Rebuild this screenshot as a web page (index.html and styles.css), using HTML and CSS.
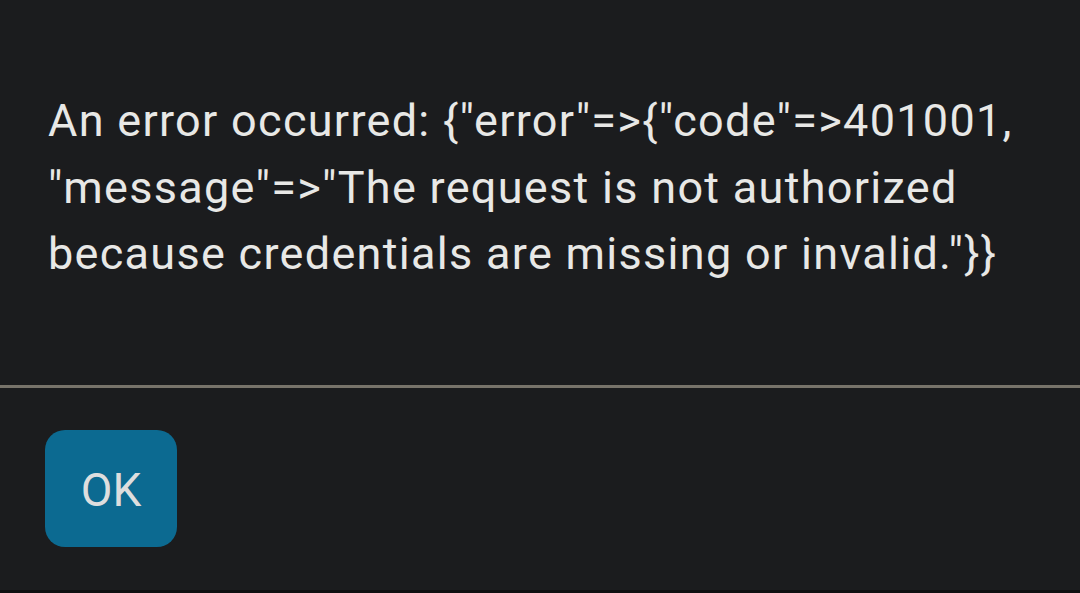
FILE: index.html
```html
<!DOCTYPE html>
<html lang="en">
<head>
  <meta charset="UTF-8" />
  <meta name="viewport" content="width=device-width, initial-scale=1.0" />
  <title>Error</title>
  <link rel="stylesheet" href="styles.css">
</head>
<body>
  <div class="dialog">
    <p class="message">An error occurred: {"error"=&gt;{"code"=&gt;401001, "message"=&gt;"The request is not authorized because credentials are missing or invalid."}}</p>
    <hr class="divider">
    <div class="actions">
      <button class="btn-ok" type="button">OK</button>
    </div>
  </div>
  <div class="behind"></div>
</body>
</html>
```

FILE: styles.css
```css
* {
  box-sizing: border-box;
  margin: 0;
  padding: 0;
}
html, body {
  height: 100%;
}
body {
  background: #1b1c1e;
  font-family: Roboto, "Noto Sans", sans-serif;
  color: #e8e8e6;
  overflow: hidden;
  display: flex;
  flex-direction: column;
}
.dialog {
  flex: 1;
}
.message {
  font-size: 45px;
  line-height: 66.5px;
  letter-spacing: 1.3px;
  padding: 88px 40px 0 48px;
  height: 385px;
}
.divider {
  border: none;
  height: 3px;
  background: #77736a;
}
.actions {
  padding: 42px 45px 0;
}
.btn-ok {
  width: 132px;
  height: 117px;
  border: none;
  border-radius: 20px;
  background: #0c6a91;
  color: #dedede;
  font-family: Roboto, "Noto Sans", sans-serif;
  font-size: 46px;
  padding-top: 2px;
}
.behind {
  height: 3px;
  background: #0f0f10;
}
```
